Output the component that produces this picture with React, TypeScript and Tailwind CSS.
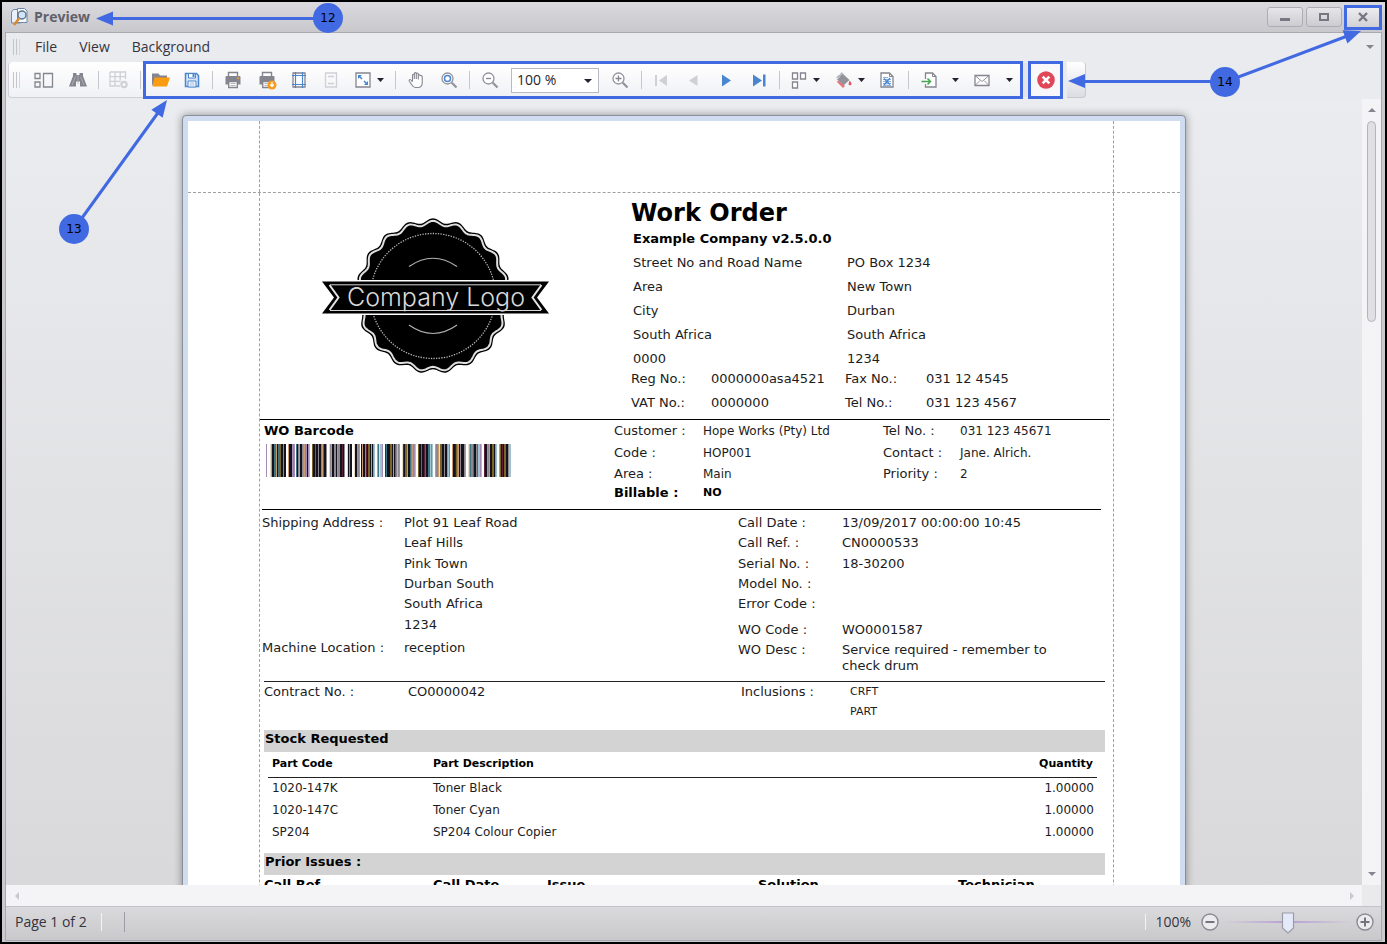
import type { ReactNode } from "react";

const UI = "font-['Open_Sans','Noto_Sans',sans-serif]";
const DOC = "font-['DejaVu_Sans',Verdana,sans-serif]";
const GREY = "#85858f";
const PALE = "#cfcfd6";
const BLUE = "#4a86cf";

function Icon({ children, size = 20 }: { children: ReactNode; size?: number }) {
  return (
    <svg width={size} height={size} viewBox="0 0 20 20" fill="none" className="shrink-0" aria-hidden="true">
      {children}
    </svg>
  );
}

function Tool({ label, w, children }: { label: string; w: string; children: ReactNode }) {
  return (
    <button type="button" aria-label={label} className={`flex h-full shrink-0 items-center justify-center ${w}`}>
      {children}
    </button>
  );
}

function Caret({ label, w }: { label: string; w: string }) {
  return (
    <Tool label={label} w={w}>
      <svg width="7" height="4" viewBox="0 0 7 4" className="shrink-0" aria-hidden="true">
        <path d="M0 0h7L3.500 4z" fill="#222230" />
      </svg>
    </Tool>
  );
}

function Sep({ w = "w-[6px]" }: { w?: string }) {
  return (
    <span className={`flex shrink-0 justify-center ${w}`}>
      <span className="h-[18px] w-px bg-[#c6c6cc]" />
    </span>
  );
}

function Grip() {
  return (
    <span className="flex gap-[2px]">
      <span className="h-4 w-px bg-[#c4c4ca]" />
      <span className="h-4 w-px bg-[#c4c4ca]" />
      <span className="h-4 w-px bg-[#d4d4da]" />
    </span>
  );
}

function Lens({ inner }: { inner: ReactNode }) {
  return (
    <Icon>
      <circle cx="8.500" cy="8.500" r="5.500" stroke="#92929b" strokeWidth="1.300" fill="#fff" />
      <path d="M12.800 12.800L17.500 17.500" stroke="#92929b" strokeWidth="2.200" />
      {inner}
    </Icon>
  );
}

function Printer({ badge = false }: { badge?: boolean }) {
  return (
    <Icon>
      <path d="M5.500 6V2.500h9V6" stroke={GREY} strokeWidth="1.400" fill="#fff" />
      <path d="M3.500 6h13q1 0 1 1v7.500h-3v-3h-9v3h-3V7q0-1 1-1z" fill={GREY} />
      <path d="M5.700 11.500h8.600v6H5.700z" stroke={GREY} strokeWidth="1.400" fill="#fff" />
      <path d="M7.500 13.500h5M7.500 15.500h5" stroke="#b5b5bd" />
      {badge ? (
        <>
          <circle cx="15" cy="15" r="4.500" fill="#f79d1e" />
          <path d="M15 12v3.500M13.300 14.500L15 16.500l1.700-2" stroke="#fff" strokeWidth="1.200" />
        </>
      ) : (
        <rect x="14" y="7.500" width="2" height="1.500" fill="#f79d1e" />
      )}
    </Icon>
  );
}

function Toolbar() {
  return (
    <div className="flex h-[38px] items-center pl-[2px]">
      <div className="flex h-[36px] w-[135px] shrink-0 items-center rounded-l border-b border-l border-[#d0d0d6] bg-linear-to-b from-white to-[#f0f1f5]">
        <span className="w-[18px] pl-[4px]"><Grip /></span>
        <Tool label="Thumbnails" w="w-[34px]">
          <Icon>
            <path d="M1 3.500h5v5H1zM1 12h5v5H1zM9.500 3.500h9V17h-9z" stroke={GREY} strokeWidth="1.300" />
          </Icon>
        </Tool>
        <Tool label="Find" w="w-[34px]">
          <Icon>
            <path d="M5 3h3.500v2h3V3H15v3l4 10.500h-7v-5H8v5H1L5 6z" fill={GREY} />
            <path d="M10 5v9M7.500 6.500L4 15M12.500 6.500L16 15" stroke="#b5b5bd" strokeWidth="0.800" />
          </Icon>
        </Tool>
        <Sep />
        <Tool label="Customize" w="w-[36px]">
          <Icon>
            <path d="M1 2h15.500v7M1 2v14h10M1 6.600h15.500M1 11.300h10.500M6 2v14M11.200 2v8.500" stroke={PALE} strokeWidth="1.300" />
            <circle cx="15" cy="14.500" r="2.700" stroke={PALE} strokeWidth="2" />
          </Icon>
        </Tool>
        <Sep />
      </div>
      <div className="flex h-[38px] shrink-0 items-center border-[3px] border-[#4169e1] bg-linear-to-b from-white to-[#f0f1f5]">
        <Tool label="Open" w="w-[29px]">
          <Icon>
            <path d="M1 16V3.500h6.500l1.500 2h7V9H4.500z" fill="#85858f" />
            <path d="M1.500 16.500L3.500 7.500h15.500l-3 9z" fill="#f99c11" />
          </Icon>
        </Tool>
        <Tool label="Save" w="w-[34px]">
          <Icon>
            <path d="M3.500 3.500h11l2 2v11h-13z" stroke={BLUE} strokeWidth="1.500" fill="#d8e6f8" />
            <path d="M6.500 3.500h7v4.500h-7z" fill="#fff" stroke={BLUE} />
            <path d="M10.500 4h2v3h-2z" fill={BLUE} />
            <path d="M6 11h8v6H6z" fill="#fff" stroke={BLUE} />
            <path d="M7.500 13h5M7.500 15h5" stroke="#9fb9df" />
          </Icon>
        </Tool>
        <Sep />
        <Tool label="Print" w="w-[36px]"><Printer /></Tool>
        <Tool label="Quick print" w="w-[32px]"><Printer badge /></Tool>
        <Tool label="Page setup" w="w-[32px]">
          <Icon>
            <path d="M4 3h12v14H4z" stroke={GREY} strokeWidth="1.300" fill="#fff" />
            <path d="M6.500 2v16M13.500 2v16M3 5.500h14M3 14.500h14" stroke={BLUE} strokeWidth="1.200" />
          </Icon>
        </Tool>
        <Tool label="Header and footer" w="w-[32px]">
          <Icon>
            <path d="M4.500 3h11v14h-11z" stroke={PALE} strokeWidth="1.300" />
            <path d="M7 6.500h6M7 13.500h6" stroke={PALE} strokeWidth="1.500" />
          </Icon>
        </Tool>
        <span className="w-[2px]" />
        <Tool label="Scale" w="w-[28px]">
          <Icon>
            <path d="M3 3h14v14H3z" stroke={GREY} strokeWidth="1.300" fill="#fff" />
            <path d="M5 5h4L5 9zM15 15h-4l4-4z" fill={BLUE} />
            <path d="M6 6l3 3M14 14l-3-3" stroke={BLUE} strokeWidth="1.500" />
          </Icon>
        </Tool>
        <Caret label="Scale options" w="w-[7px]" />
        <span className="w-[8px]" />
        <Sep />
        <Tool label="Hand tool" w="w-[36px]">
          <Icon>
            <path
              d="M6.500 11V5.200q0-1 .9-1t.9 1V9V3.600q0-1 1-1t1 1V9V4q0-1 1-1t1 1v5.500V5.600q0-.9.900-.9t1 .9q1.700-.4 2 1V13q0 4.500-4.500 4.500H9.500q-2 0-3.500-2.500L3.500 11.500q-.8-1.300.2-1.900t2.800 2.400"
              stroke="#85858f"
              strokeWidth="1.100"
              fill="#fff"
            />
          </Icon>
        </Tool>
        <Tool label="Magnifier" w="w-[30px]">
          <Lens inner={<circle cx="8.500" cy="8.500" r="3" stroke={BLUE} strokeWidth="1.500" />} />
        </Tool>
        <Sep w="w-[10px]" />
        <Tool label="Zoom out" w="w-[32px]">
          <Lens inner={<path d="M6 8.500h5" stroke="#85858f" strokeWidth="1.300" />} />
        </Tool>
        <span className="relative ml-[5px] flex h-[25px] w-[88px] border border-[#b9b9c1] bg-white">
          <select aria-label="Zoom" defaultValue="100 %" className="w-full appearance-none bg-transparent pl-[5px] text-sm leading-5 text-[#26262e] outline-none">
            <option>100 %</option>
          </select>
          <svg className="pointer-events-none absolute right-[6px] top-[10px]" width="8" height="4" viewBox="0 0 8 4" aria-hidden="true">
            <path d="M0 0h8L4 4z" fill="#222230" />
          </svg>
        </span>
        <span className="w-[4px]" />
        <Tool label="Zoom in" w="w-[34px]">
          <Lens inner={<path d="M5.500 8.500h6M8.500 5.500v6" stroke="#85858f" strokeWidth="1.300" />} />
        </Tool>
        <Sep w="w-[8px]" />
        <Tool label="First page" w="w-[32px]">
          <Icon><path d="M4 5h2v11H4zM16 5v11l-8-5.500z" fill={PALE} /></Icon>
        </Tool>
        <Tool label="Previous page" w="w-[32px]">
          <Icon><path d="M14.500 5v11L6 10.500z" fill={PALE} /></Icon>
        </Tool>
        <Tool label="Next page" w="w-[34px]">
          <Icon><path d="M6 4.500v12l9-6z" fill={BLUE} /></Icon>
        </Tool>
        <Tool label="Last page" w="w-[32px]">
          <Icon><path d="M4 4.500v12l9-6zM14 4.500h2.500v12H14z" fill={BLUE} /></Icon>
        </Tool>
        <Sep w="w-[8px]" />
        <span className="w-[2px]" />
        <Tool label="Multiple pages" w="w-[28px]">
          <Icon>
            <path d="M3.500 3h5v6h-5zM11.500 3h5v6h-5zM3.500 12h5v6h-5z" stroke={GREY} strokeWidth="1.300" fill="#fff" />
          </Icon>
        </Tool>
        <Caret label="Multiple pages options" w="w-[7px]" />
        <span className="w-[10px]" />
        <Tool label="Background colour" w="w-[28px]">
          <Icon>
            <path d="M8.500 3.500l7 6.500-6 5.500-6.500-6z" fill="#92929b" />
            <path d="M4.500 8.500l3-5.500 2.500 2M2.500 8l3-3" stroke="#b5b5bd" strokeWidth="1.200" />
            <path d="M2.500 11.500l6.500 6.500 2-2-6-5z" fill="#e2767f" />
            <path d="M15.500 10.500q3 3 1.500 4.500-2 .7-2.500-1z" fill="#e0555f" />
          </Icon>
        </Tool>
        <Caret label="Background colour options" w="w-[7px]" />
        <span className="w-[6px]" />
        <Tool label="Watermark" w="w-[32px]">
          <Icon>
            <path d="M4 3h8.500L16 6.500V17H4z" stroke={GREY} strokeWidth="1.300" fill="#fff" />
            <path d="M12.500 3v3.500H16" stroke={GREY} />
            <path d="M6 7.500h5M6 9.500h8M6 11.500h8M6 13.500h8M6 15.300h8" stroke="#8fb0e6" strokeWidth="1.200" />
            <path d="M7 15l6-7M7 8.500l6 6" stroke={BLUE} strokeWidth="1.200" />
          </Icon>
        </Tool>
        <Sep w="w-[10px]" />
        <Tool label="Export" w="w-[34px]">
          <Icon>
            <path d="M5.500 9V3h7L16 6.500V17H5.500v-3" stroke={GREY} strokeWidth="1.300" fill="#fff" />
            <path d="M12.500 3v3.500H16" stroke={GREY} />
            <path d="M1.500 11.500H10M7.500 8.500l3 3-3 3" stroke="#45a552" strokeWidth="1.500" />
          </Icon>
        </Tool>
        <Caret label="Export options" w="w-[16px]" />
        <Tool label="Send by e-mail" w="w-[38px]">
          <Icon>
            <path d="M3 5.500h14v10H3z" stroke={GREY} strokeWidth="1.300" fill="#fff" />
            <path d="M3.500 6l6.500 5.500L16.500 6M3.500 15l4.500-4.500M16.500 15L12 10.500" stroke={GREY} strokeWidth="0.900" />
          </Icon>
        </Tool>
        <Caret label="E-mail options" w="w-[16px]" />
        <span className="w-[3px]" />
      </div>
      <span className="h-[34px] w-[5px] bg-[#e4e5ea]" />
      <button type="button" aria-label="Close preview" className="flex h-[38px] w-[35px] shrink-0 items-center justify-center border-[3px] border-[#4169e1] bg-[#f8f8fb]">
        <Icon>
          <circle cx="10" cy="10" r="8.800" fill="#e0485a" />
          <path d="M6.700 6.700l6.600 6.600M13.300 6.700l-6.600 6.600" stroke="#fff" strokeWidth="2.600" />
        </Icon>
      </button>
      <span className="ml-[4px] h-[36px] w-[19px] rounded-r border-b border-r border-[#c8c8d0] bg-linear-to-b from-white to-[#dcdde3]" />
    </div>
  );
}

function scallop(radius: number, depth: number) {
  const points: string[] = [];
  for (let i = 0; i < 380; i += 1) {
    const a = (i / 380) * Math.PI * 2;
    const r = radius + depth * Math.cos(19 * a);
    points.push(`${(123 + r * Math.sin(a)).toFixed(2)},${(91 - r * Math.cos(a)).toFixed(2)}`);
  }
  return `M${points.join("L")}Z`;
}

function Logo() {
  return (
    <svg width="250" height="180" viewBox="0 0 250 180" role="img" aria-label="Company Logo">
      <path d={scallop(75.500, 2.200)} fill="#000" />
      <path d={scallop(73, 2.200)} fill="none" stroke="#e0e0e0" strokeWidth="2" />
      <circle cx="123" cy="91" r="62.500" fill="none" stroke="#b8b8b8" strokeWidth="1.300" strokeDasharray="1.300 1.300" />
      <path d="M99 61.500Q123 45 147 61.500M99 120Q123 137 147 120" fill="none" stroke="#b0b0b0" strokeWidth="1.200" />
      <path d="M46 75h154v35H46z" fill="#fff" />
      <path d="M12 76.500h227l-12 16 12 16H12l12-16z" fill="#000" />
      <path d="M20 79.800h211M20 105.500h211" stroke="#d5d5d5" strokeWidth="1" />
      <path d="M19.500 80l9 12.500-9 12.500M231.500 80l-9 12.500 9 12.500" fill="none" stroke="#e4e4e4" strokeWidth="2" />
      <text x="126" y="101" textAnchor="middle" fontSize="25" fill="#d8d8d8" className="font-['Inter',sans-serif] font-light">
        Company Logo
      </text>
    </svg>
  );
}

const BARS =
  "p...ltkkcotkcookkgkk..tkkpgp.ckgtkkgptgpkpb..okkokkgkkgtokkg..lgtkkggkpgkkmkg..lkgkk..lkkpgp.ktkkgmkocktkpb..tclbbp.." +
  "mckkocktkcgbgp..lmkcotkkcgtgpb..okkckkmokkccbgb..tgtlookkgkkpbg..tkknogtkgkkkgt..ltcggokkgcbbpb..mkpgtkkockpb..tokmkockkgbb";

const BAR_COLORS: Record<string, string> = {
  p: "#a58cb4", l: "#e6dcc8", t: "#c79a72", k: "#14121c", c: "#3f7684", o: "#7a6326",
  g: "#8d8790", b: "#9fc3d0", m: "#5c1f38", n: "#1c2350",
};

function Barcode() {
  return (
    <svg width="245" height="33" viewBox={`0 0 ${BARS.length} 33`} preserveAspectRatio="none" role="img" aria-label="Work order barcode" shapeRendering="crispEdges">
      {BARS.split("").map((c, i) => (c === "." ? null : <rect key={i} x={i} width="1" height="33" fill={BAR_COLORS[c]} />))}
    </svg>
  );
}

const ADDRESS: [string, string][] = [
  ["Street No and Road Name", "PO Box 1234"],
  ["Area", "New Town"],
  ["City", "Durban"],
  ["South Africa", "South Africa"],
  ["0000", "1234"],
];

const CALL: [string, string][] = [
  ["Call Date :", "13/09/2017 00:00:00 10:45"],
  ["Call Ref. :", "CN0000533"],
  ["Serial No. :", "18-30200"],
  ["Model No. :", ""],
  ["Error Code :", ""],
];

const STOCK: [string, string, string][] = [
  ["1020-147K", "Toner Black", "1.00000"],
  ["1020-147C", "Toner Cyan", "1.00000"],
  ["SP204", "SP204 Colour Copier", "1.00000"],
];

function WorkOrder() {
  return (
    <article className={`${DOC} text-[13px] text-[#1c1c22]`}>
      <header className="mr-[3px] grid grid-cols-[371px_1fr] border-b border-black">
        <div className="pl-[50px] pt-[12px]"><Logo /></div>
        <div className="pb-[4px] pt-[7px]">
          <h1 className="text-[24px] font-bold leading-[27px] text-black">Work Order</h1>
          <h2 className="pl-[2px] font-bold leading-6 text-black">Example Company v2.5.0.0</h2>
          <div className="grid grid-cols-[214px_1fr] pl-[2px] leading-6">
            {ADDRESS.flatMap(([a, b], i) => [<span key={`a${i}`}>{a}</span>, <span key={`b${i}`}>{b}</span>])}
          </div>
          <div className="-mt-[4px] grid grid-cols-[80px_134px_81px_1fr] leading-6">
            <span>Reg No.:</span><span>0000000asa4521</span><span>Fax No.:</span><span>031 12 4545</span>
            <span>VAT No.:</span><span>0000000</span><span>Tel No.:</span><span>031 123 4567</span>
          </div>
        </div>
      </header>

      <section className="ml-[2px] mr-[12px] grid grid-cols-[352px_1fr] border-b border-black pb-[7px]">
        <div className="pl-[2px]">
          <h3 className="font-bold leading-[22px] text-black">WO Barcode</h3>
          <div className="pl-[2px] pt-[2px]"><Barcode /></div>
        </div>
        <div className="grid grid-cols-[89px_180px_77px_1fr] grid-rows-[22px_21px_21px_18px] items-center leading-[18px]">
          <span>Customer :</span><span className="text-xs">Hope Works (Pty) Ltd</span><span>Tel No. :</span><span className="text-xs">031 123 45671</span>
          <span>Code :</span><span className="text-xs">HOP001</span><span>Contact :</span><span className="text-xs">Jane. Alrich.</span>
          <span>Area :</span><span className="text-xs">Main</span><span>Priority :</span><span className="text-xs">2</span>
          <b className="text-black">Billable :</b><b className="text-[11px] text-black">NO</b>
        </div>
      </section>

      <section className="ml-[2px] mr-[8px] grid grid-cols-[476px_1fr] pb-[7px] pt-[3px]">
        <div className="grid grid-cols-[142px_1fr] content-start leading-5">
          <span>Shipping Address :</span>
          <address className="grid grid-rows-[20px_21px_20px_20px_21px_23px] not-italic">
            <span>Plot 91 Leaf Road</span><span>Leaf Hills</span><span>Pink Town</span>
            <span>Durban South</span><span>South Africa</span><span>1234</span>
          </address>
          <span>Machine Location :</span><span>reception</span>
        </div>
        <div>
          <div className="grid grid-cols-[104px_225px] grid-rows-[20px_21px_20px_20px_20px] leading-5">
            {CALL.flatMap(([a, b], i) => [<span key={`a${i}`}>{a}</span>, <span key={`b${i}`}>{b}</span>])}
          </div>
          <div className="grid grid-cols-[104px_225px] gap-y-[2px] pt-[6px] leading-4">
            <span className="leading-5">WO Code :</span><span className="leading-5">WO0001587</span>
            <span>WO Desc :</span><span>Service required - remember to check drum</span>
          </div>
        </div>
      </section>

      <section className="ml-[4px] mr-[8px] grid grid-cols-[144px_333px_109px_1fr] border-t border-[#222] pb-[8px] leading-5">
        <span>Contract No. :</span><span>CO0000042</span><span>Inclusions :</span>
        <span className="flex flex-col text-[11px]"><span>CRFT</span><span>PART</span></span>
      </section>

      <section className="ml-[4px] mr-[8px]">
        <h3 className="bg-[#d3d3d3] pb-1 pl-px font-bold leading-[18px] text-black">Stock Requested</h3>
        <div className="pb-[10px] pl-[4px] pr-[8px]">
          <table className="w-full table-fixed text-xs">
            <thead className="border-b border-[#222] text-[11px] text-black">
              <tr className="h-[25px]">
                <th className="w-[161px] pl-[4px] text-left">Part Code</th>
                <th className="pl-[4px] text-left">Part Description</th>
                <th className="w-[120px] pr-[4px] text-right">Quantity</th>
              </tr>
            </thead>
            <tbody>
              {STOCK.map(([code, name, qty]) => (
                <tr key={code} className="h-[22px]">
                  <td className="pl-[4px]">{code}</td>
                  <td className="pl-[4px]">{name}</td>
                  <td className="pr-[3px] text-right">{qty}</td>
                </tr>
              ))}
            </tbody>
          </table>
        </div>
        <h3 className="bg-[#d3d3d3] pb-1 pl-px font-bold leading-[18px] text-black">Prior Issues :</h3>
        <table className="w-full table-fixed text-left text-black">
          <thead>
            <tr>
              <th className="w-[169px] leading-5">Call Ref</th>
              <th className="w-[114px]">Call Date</th>
              <th className="w-[211px]">Issue</th>
              <th className="w-[200px]">Solution</th>
              <th>Technician</th>
            </tr>
          </thead>
        </table>
      </section>
    </article>
  );
}

function Triangle({ dir, color = "#85858f" }: { dir: "up" | "down" | "left" | "right"; color?: string }) {
  const d = {
    up: "M1 7h8L5 3z",
    down: "M1 3h8L5 7z",
    left: "M7 1v8L3 5z",
    right: "M3 1v8l4-4z",
  }[dir];
  return (
    <svg width="10" height="10" viewBox="0 0 10 10" className="shrink-0" aria-hidden="true">
      <path d={d} fill={color} />
    </svg>
  );
}

function WindowButton({ label, children, marked = false }: { label: string; children: ReactNode; marked?: boolean }) {
  return (
    <button
      type="button"
      aria-label={label}
      className={
        marked
          ? "flex h-[25px] w-[38px] items-center justify-center border-[3px] border-[#4169e1] bg-linear-to-b from-[#eeeef1] to-[#d0d0d6]"
          : "flex h-[20px] w-[36px] items-center justify-center rounded-[3px] border border-[#adadb5] bg-linear-to-b from-[#e6e6ea] to-[#cbcbd1]"
      }
    >
      <svg width="14" height="12" viewBox="0 0 14 12" fill="none" stroke="#777782" aria-hidden="true">{children}</svg>
    </button>
  );
}

function Callouts() {
  const head = "M0 0L-17 -7V7Z";
  return (
    <svg className="pointer-events-none absolute inset-0 h-full w-full" aria-hidden="true">
      <g transform="translate(-2 -2)">
        <g stroke="#4169e1" strokeWidth="3">
          <path d="M328 18.500H108M74 229L160 110M1225 81.500H1080M1225 82L1350 35" fill="none" />
        </g>
        <g fill="#4169e1">
          <path d={head} transform="translate(96 18.500) rotate(180)" />
          <path d={head} transform="translate(167 100) rotate(-54)" />
          <path d={head} transform="translate(1068 81) rotate(180)" />
          <path d={head} transform="translate(1361 31) rotate(-20)" />
          <circle cx="328" cy="18" r="15" />
          <circle cx="74" cy="229" r="15" />
          <circle cx="1225" cy="82" r="15" />
        </g>
        <g className={`${DOC} text-xs`} textAnchor="middle" fill="#000">
          <text x="328" y="22">12</text>
          <text x="74" y="233">13</text>
          <text x="1225" y="86">14</text>
        </g>
      </g>
    </svg>
  );
}

export default function App() {
  return (
    <div className={`${UI} relative flex h-screen flex-col overflow-hidden border-2 border-black bg-[#c9c9ce] text-sm text-[#34343f]`}>
      <header className="flex h-[30px] shrink-0 items-center bg-linear-to-b from-[#dadade] to-[#c8c8cd] pl-[8px] pr-[3px]">
        <svg width="20" height="20" viewBox="0 0 20 20" fill="none" aria-hidden="true">
          <path d="M3.500 2.500h7v13.500h-9v-11z" fill="#e8f1fb" stroke="#6d87ad" />
          <path d="M7.500 1.500h7l2.500 2.500v11.500H7.500z" fill="#f5f9fe" stroke="#6d87ad" />
          <circle cx="12" cy="8" r="4" fill="#cfe6fa" stroke="#66717f" strokeWidth="1.400" />
          <path d="M9 11.500L4 18" stroke="#d98a2c" strokeWidth="2.600" />
        </svg>
        <h1 className="ml-[4px] flex-1 font-bold text-[#60606a]">Preview</h1>
        <div className="flex items-center">
          <WindowButton label="Minimize"><path d="M2 8.500h10" strokeWidth="3" /></WindowButton>
          <span className="w-[3px]" />
          <WindowButton label="Maximize"><path d="M3 3h8v6H3z" strokeWidth="2" /></WindowButton>
          <span className="w-[2px]" />
          <WindowButton label="Close" marked><path d="M3 2l8 8M11 2L3 10" strokeWidth="2.400" /></WindowButton>
        </div>
      </header>

      <div className="mx-[3px] mb-px flex min-h-0 flex-1 flex-col border border-[#a9a9b2] bg-[#eaebef]">
        <nav className="flex h-[28px] shrink-0 items-center pl-[7px] pr-[6px]">
          <Grip />
          <button type="button" className="ml-[15px]">File</button>
          <button type="button" className="ml-[22px]">View</button>
          <button type="button" className="ml-[22px]">Background</button>
          <span className="ml-auto"><Triangle dir="down" /></span>
        </nav>
        <Toolbar />

        <div className="flex min-h-0 flex-1">
          <main className="min-w-0 flex-1 overflow-hidden bg-linear-to-b from-[#ebecef] to-[#d9d9db] pt-[16px]">
            <div className="mx-auto w-[1004px] rounded-t border border-[#8b8f98] bg-[#d0dcf0] p-[5px] shadow-[0_0_9px_rgba(0,0,0,0.4)]">
              <div className="bg-white">
                <div className="border-b border-dashed border-[#a0a0a0] pl-[71px] pr-[66px]">
                  <div className="h-[71px] border-x border-dashed border-[#a0a0a0]" />
                </div>
                <div className="pl-[71px] pr-[66px]">
                  <div className="min-h-[980px] border-x border-dashed border-[#a0a0a0]">
                    <WorkOrder />
                  </div>
                </div>
              </div>
            </div>
          </main>
          <div className="flex w-[19px] shrink-0 flex-col items-center bg-[#f4f4f6] py-[6px]">
            <Triangle dir="up" />
            <span className="mt-[6px] h-[201px] w-[9px] rounded-full border border-[#b4b4bc] bg-[#e0e0e4]" />
            <span className="mt-auto"><Triangle dir="down" /></span>
          </div>
        </div>
        <div className="flex h-[21px] shrink-0 items-center justify-between bg-[#f4f4f6] pl-[6px]">
          <Triangle dir="left" color="#c8c8ce" />
          <span className="ml-auto mr-[5px] flex"><Triangle dir="right" color="#c8c8ce" /></span>
          <span className="h-full w-[19px] bg-[#eaeaed]" />
        </div>

        <footer className="flex h-[34px] shrink-0 items-center border-t border-[#c2c2ca] bg-linear-to-b from-[#dadade] to-[#c9c9cb] pb-[3px] pl-[9px] pr-[6px]">
          <span>Page 1 of 2</span>
          <span className="ml-[14px] h-[18px] w-px bg-[#f2f2f4]" />
          <span className="ml-[22px] h-[20px] w-px bg-[#9c9ca4]" />
          <span className="ml-auto h-[16px] w-px bg-[#f2f2f4]" />
          <label htmlFor="zoom" className="ml-[9px]">100%</label>
          <button type="button" aria-label="Decrease zoom" className="ml-[9px]">
            <Icon>
              <circle cx="10" cy="10" r="8" fill="#ececef" stroke="#8b8b94" strokeWidth="1.400" />
              <path d="M5.500 10h9" stroke="#74747e" strokeWidth="2" />
            </Icon>
          </button>
          <span className="relative mx-[3px] flex h-[24px] w-[129px] items-center">
            <input
              id="zoom"
              type="range"
              defaultValue={50}
              className="h-[2px] w-full appearance-none bg-linear-to-r from-transparent via-[#b6a0d4] via-50% to-transparent [&::-webkit-slider-thumb]:h-5 [&::-webkit-slider-thumb]:w-3 [&::-webkit-slider-thumb]:appearance-none"
            />
            <svg className="pointer-events-none absolute left-1/2 top-[2px] -translate-x-1/2" width="14" height="22" viewBox="0 0 14 22" aria-hidden="true">
              <path d="M1.500 1h11v15L7 21l-5.500-5z" fill="#e4eafa" stroke="#9b9ba6" strokeWidth="1.200" />
            </svg>
          </span>
          <button type="button" aria-label="Increase zoom">
            <Icon>
              <circle cx="10" cy="10" r="8" fill="#ececef" stroke="#8b8b94" strokeWidth="1.400" />
              <path d="M5.500 10h9M10 5.500v9" stroke="#74747e" strokeWidth="2" />
            </Icon>
          </button>
        </footer>
      </div>
      <Callouts />
    </div>
  );
}
